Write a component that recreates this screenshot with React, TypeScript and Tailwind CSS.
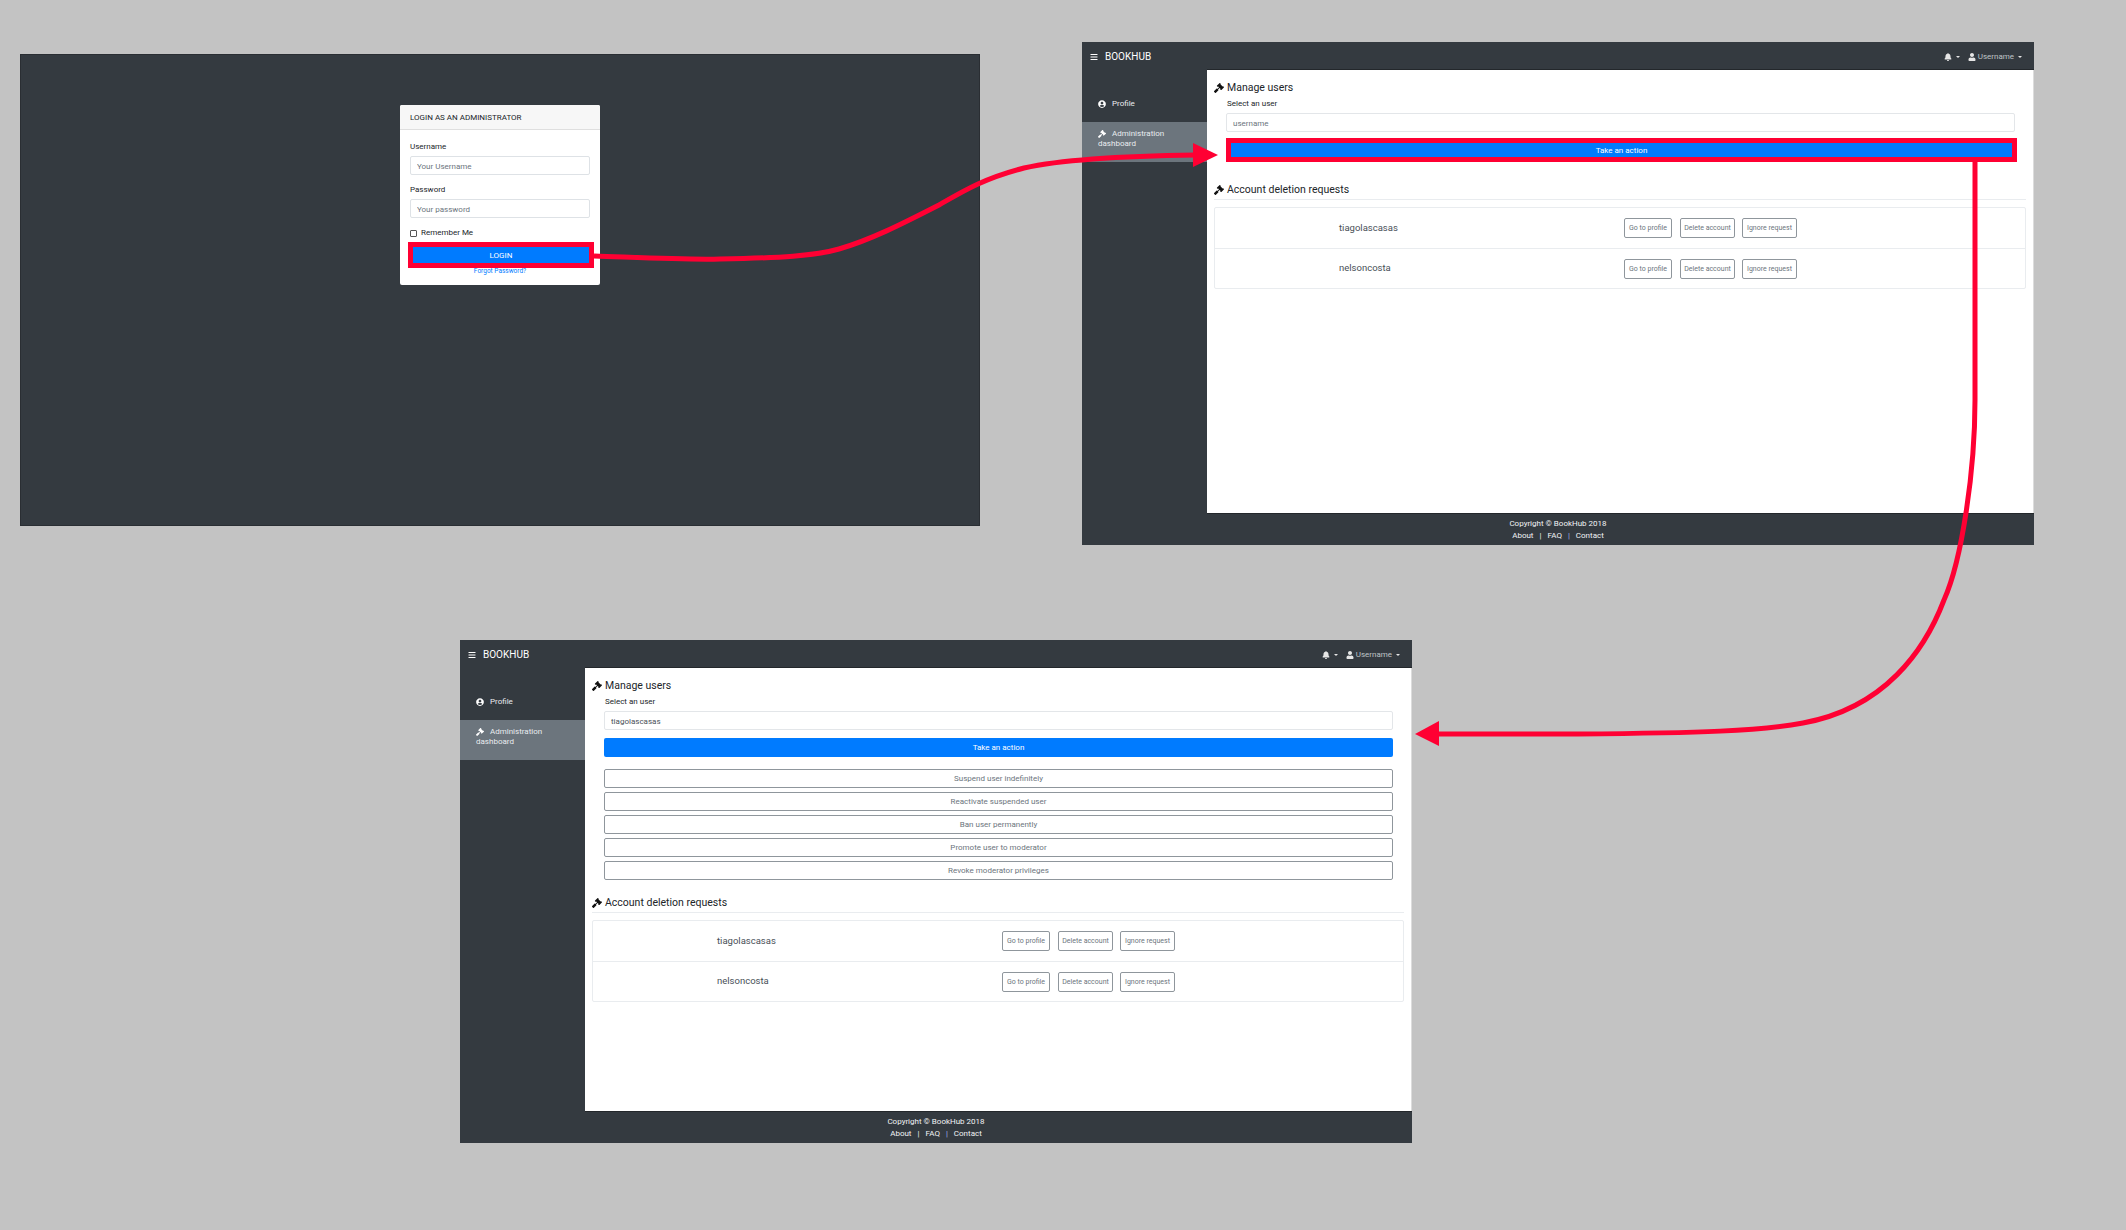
import React from "react";
import { FaBars, FaBell, FaGavel, FaUser, FaUserCircle } from "react-icons/fa";

const font = { fontFamily: 'Roboto, "Noto Sans", sans-serif' };
const actions = [
  "Suspend user indefinitely",
  "Reactivate suspended user",
  "Ban user permanently",
  "Promote user to moderator",
  "Revoke moderator privileges",
];
const requests = ["tiagolascasas", "nelsoncosta"];

function Caret() {
  return <span className="ml-[4px] inline-block h-0 w-0 border-x-[2.5px] border-t-[2.5px] border-x-transparent border-t-[#e6e6e6]" />;
}

function Heading({ children }: { children: React.ReactNode }) {
  return (
    <div className="flex h-[16px] items-center pl-[7px] text-[10.5px] text-[#212529]">
      <FaGavel className="mr-[3px] h-[10px] w-[10px] text-[#111]" />
      <span>{children}</span>
    </div>
  );
}

function LoginField({ label, placeholder, top }: { label: string; placeholder: string; top: string }) {
  return (
    <>
      <div className={`${top} h-[12px] text-[8px] leading-[12px] text-[#212529]`}>{label}</div>
      <input
        placeholder={placeholder}
        className="mt-[3px] block h-[19px] w-[180px] rounded-[2px] border border-[#dee2e6] bg-white px-[6px] pt-[1px] text-[8px] outline-none placeholder:text-[#6c757d]"
      />
    </>
  );
}

function LoginWindow() {
  return (
    <div className="absolute left-[20px] top-[54px] flex h-[472px] w-[960px] justify-center border border-[#2a2e33] bg-[#343a40] pt-[50px]" style={font}>
      <div className="h-[180px] w-[200px] rounded-[2px] bg-white">
        <div className="flex h-[25px] items-center rounded-t-[2px] border-b border-[#dfdfdf] bg-[#f7f7f7] px-[10px] pt-[1px] text-[8px] text-[#212529]">
          LOGIN AS AN ADMINISTRATOR
        </div>
        <div className="px-[10px]">
          <LoginField label="Username" placeholder="Your Username" top="mt-[11px]" />
          <LoginField label="Password" placeholder="Your password" top="mt-[9px]" />
          <div className="mt-[9px] flex h-[12px] items-center">
            <input type="checkbox" className="h-[7px] w-[7px] appearance-none rounded-[1px] border border-[#555] bg-white" />
            <span className="ml-[4px] text-[8px] text-[#212529]">Remember Me</span>
          </div>
          <button className="relative z-10 -ml-[2px] mt-[3px] block h-[26px] w-[186px] border-[5px] border-[#ff0033] bg-[#007bff] pt-[1px] text-[8px] text-white">
            LOGIN
          </button>
          <div className="relative z-20 -mt-[2px] h-[10px] text-center text-[6.5px] leading-[10px] text-[#007bff]">Forgot Password?</div>
        </div>
      </div>
    </div>
  );
}

function Dashboard({
  className,
  value,
  expanded,
}: {
  className: string;
  value?: string;
  expanded?: boolean;
}) {
  return (
    <div className={`absolute flex h-[503px] w-[952px] flex-col bg-[#343a40] ${className}`} style={font}>
      <header className="flex h-[28px] shrink-0 items-center pl-[8px] pr-[12px] pt-[1px] text-[#e6e6e6]">
        <FaBars className="h-[8px] w-[8px] text-white" />
        <span className="ml-[7px] text-[10px] text-white">BOOKHUB</span>
        <div className="ml-auto flex items-center text-[8px]">
          <FaBell className="h-[8px] w-[8px]" />
          <Caret />
          <FaUser className="ml-[8px] h-[8px] w-[8px]" />
          <span className="ml-[2px] text-[#bfc3c7]">Username</span>
          <Caret />
        </div>
      </header>
      <div className="flex min-h-0 flex-1">
        <aside className="w-[125px] shrink-0 pt-[16px] text-[8px] text-[#e9ecef]">
          <div className="flex h-[36px] items-center pl-[16px]">
            <FaUserCircle className="h-[8px] w-[8px] text-white" />
            <span className="ml-[6px]">Profile</span>
          </div>
          <div className="h-[40px] bg-[#6c757d] pl-[16px] pt-[7px] leading-[10px]">
            <FaGavel className="mr-[6px] inline-block h-[8px] w-[8px] text-white" />
            Administration
            <br />
            dashboard
          </div>
        </aside>
        <main className="relative min-w-0 flex-1 border-r border-[#dcdcdc] bg-white pt-[10px] shadow-[0_-1px_0_#23272b,0_1px_0_#23272b]">
          <Heading>Manage users</Heading>
          <div className="ml-[19px] mr-[18px]">
            <div className="mt-[2px] h-[12px] pl-[1px] text-[8px] leading-[12px] text-[#212529]">Select an user</div>
            <input
              readOnly
              defaultValue={value}
              placeholder="username"
              className="mt-[3px] block h-[19px] w-full rounded-[2px] border border-[#e3e6e9] px-[6px] pt-[1px] text-[8px] text-[#495057] outline-none placeholder:text-[#6c757d]"
            />
            {expanded ? (
              <>
                <button className="mt-[8px] block h-[19px] w-full rounded-[2px] bg-[#007bff] pt-[1px] text-[8px] text-white">Take an action</button>
                <div className="mt-[12px] flex flex-col gap-[4px]">
                  {actions.map((a) => (
                    <button key={a} className="h-[19px] w-full rounded-[2px] border border-[#8f969c] bg-white pt-[1px] text-[8px] text-[#6c757d]">
                      {a}
                    </button>
                  ))}
                </div>
              </>
            ) : (
              <button className="relative z-10 mt-[6px] block h-[24px] w-[791px] border-[5px] border-[#ff0033] bg-[#007bff] pt-[1px] text-[8px] text-white">
                Take an action
              </button>
            )}
          </div>
          <div className={expanded ? "mt-[15px]" : "mt-[20px]"}>
            <Heading>Account deletion requests</Heading>
          </div>
          <div className="ml-[7px] mr-[7px] mt-[1px] border-t border-[#e9ecef] pt-[7px]">
            <div className="rounded-[2px] border border-[#e9ecef]">
              {requests.map((name, i) => (
                <div key={name} className={`flex h-[40px] items-center ${i ? "border-t border-[#e9ecef]" : ""}`}>
                  <span className="ml-[124px] w-[285px] text-[9.5px] text-[#495057]">{name}</span>
                  {[["Go to profile", "w-[48px]"], ["Delete account", "ml-[8px] w-[55px]"], ["Ignore request", "ml-[7px] w-[55px]"]].map(([t, c]) => (
                    <button key={t} className={`h-[20px] rounded-[2px] border border-[#8f969c] pt-[1px] text-[7px] text-[#6c757d] ${c}`}>
                      {t}
                    </button>
                  ))}
                </div>
              ))}
            </div>
          </div>
        </main>
      </div>
      <footer className="flex h-[32px] shrink-0 flex-col items-center pt-[5px] text-[8px] leading-[12px] text-[#f1f3f5]">
        <div>Copyright © BookHub 2018</div>
        <div>
          About<span className="mx-[6px]">|</span>FAQ<span className="mx-[6px] text-[#9db8e8]">|</span>Contact
        </div>
      </footer>
    </div>
  );
}

function Arrows() {
  return (
    <svg className="pointer-events-none absolute left-0 top-0 z-30" width="2126" height="1230" viewBox="0 0 2126 1230" fill="none">
      <path d="M594 256 C650 258 690 260 720 259 C780 258 815 256 839 249 C870 240 900 225 939 205 C965 190 985 178 1024 168 C1060 160 1120 156 1196 155" stroke="#ff0033" strokeWidth="5" />
      <polygon points="1193,143 1218,155 1193,167" fill="#ff0033" />
      <path d="M1975 162 L1975 400 C1975 470 1962 560 1944 600 C1925 650 1885 708 1803 723 C1760 731 1700 733 1578 734 L1436 734" stroke="#ff0033" strokeWidth="5" />
      <polygon points="1439,721 1415,734 1439,746" fill="#ff0033" />
    </svg>
  );
}

export default function App() {
  return (
    <div className="relative h-[1230px] w-[2126px] overflow-hidden bg-[#c3c3c3]">
      <LoginWindow />
      <Dashboard className="left-[1082px] top-[42px]" />
      <Dashboard className="left-[460px] top-[640px]" value="tiagolascasas" expanded />
      <Arrows />
    </div>
  );
}
